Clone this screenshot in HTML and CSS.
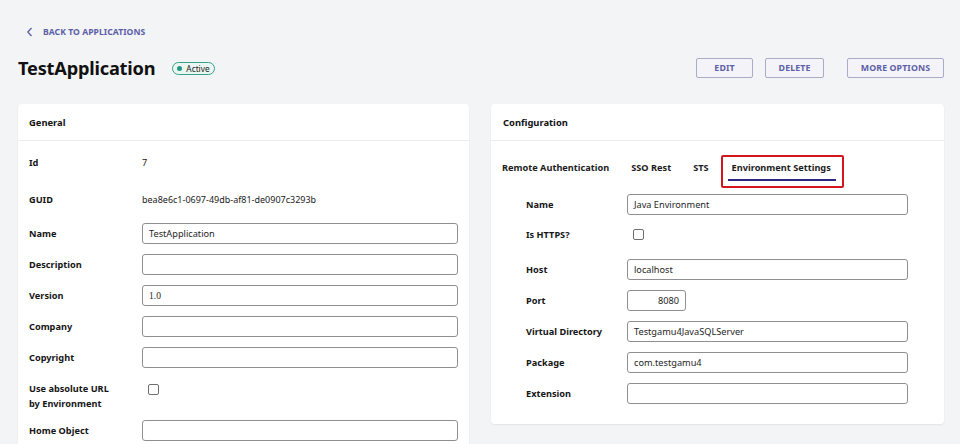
FILE: index.html
```html
<!DOCTYPE html>
<html lang="en">
<head>
<meta charset="utf-8">
<title>TestApplication</title>
<link rel="stylesheet" href="styles.css">
</head>
<body>
<div class="page">
  <a class="back" href="#">
    <svg class="chev" width="8" height="10" viewBox="0 0 8 10"><path d="M5.5 1 L1.8 5 L5.5 9" fill="none" stroke="#5c5fa8" stroke-width="1.3"/></svg>
    <span>BACK TO APPLICATIONS</span>
  </a>
  <div class="header">
    <div class="title-wrap">
      <h1 class="title">TestApplication</h1>
      <span class="badge"><span class="dot"></span>Active</span>
    </div>
    <div class="actions">
      <button class="btn">EDIT</button>
      <button class="btn">DELETE</button>
      <button class="btn btn-more">MORE OPTIONS</button>
    </div>
  </div>
  <div class="cards">
    <section class="card">
      <div class="card-head">General</div>
      <div class="card-body general">
        <div class="row info id-row"><div class="lbl">Id</div><div class="val">7</div></div>
        <div class="row info guid-row"><div class="lbl">GUID</div><div class="val">bea8e6c1-0697-49db-af81-de0907c3293b</div></div>
        <div class="row"><div class="lbl">Name</div><div class="inp">TestApplication</div></div>
        <div class="row"><div class="lbl">Description</div><div class="inp"></div></div>
        <div class="row"><div class="lbl">Version</div><div class="inp serif">1.0</div></div>
        <div class="row"><div class="lbl">Company</div><div class="inp"></div></div>
        <div class="row"><div class="lbl">Copyright</div><div class="inp"></div></div>
        <div class="row check-row"><div class="lbl two">Use absolute URL<br>by Environment</div><div class="cb cb-left"></div></div>
        <div class="row"><div class="lbl">Home Object</div><div class="inp"></div></div>
      </div>
    </section>
    <section class="card config">
      <div class="card-head">Configuration</div>
      <div class="card-body">
        <div class="tabs">
          <div class="tab">Remote Authentication</div>
          <div class="tab">SSO Rest</div>
          <div class="tab">STS</div>
          <div class="tab active"><span class="tab-label">Environment Settings</span></div>
        </div>
        <div class="env">
          <div class="row"><div class="lbl">Name</div><div class="inp">Java Environment</div></div>
          <div class="row cb-row"><div class="lbl">Is HTTPS?</div><div class="cb cb-right"></div></div>
          <div class="row"><div class="lbl">Host</div><div class="inp">localhost</div></div>
          <div class="row"><div class="lbl">Port</div><div class="inp port">8080</div></div>
          <div class="row"><div class="lbl">Virtual Directory</div><div class="inp">Testgamu4JavaSQLServer</div></div>
          <div class="row"><div class="lbl">Package</div><div class="inp">com.testgamu4</div></div>
          <div class="row"><div class="lbl">Extension</div><div class="inp"></div></div>
        </div>
      </div>
    </section>
  </div>
</div>
</body>
</html>
```
FILE: styles.css
```css
* { box-sizing: border-box; }
html, body { margin: 0; padding: 0; }
body {
  background: #f3f4f6;
  font-family: "Noto Sans", "Open Sans", sans-serif;
  color: #1b1b1b;
  width: 960px;
  height: 444px;
  overflow: hidden;
}
.page { padding: 25px 16px 0 18px; }
.back {
  display: flex;
  align-items: center;
  gap: 9px;
  margin-left: 8px;
  height: 14px;
  color: #5c5fa8;
  text-decoration: none;
  font-size: 8.6px;
  font-weight: 700;
  letter-spacing: 0.05px;
}
.header {
  display: flex;
  align-items: center;
  justify-content: space-between;
  margin-top: 17px;
  height: 24px;
}
.title-wrap { display: flex; align-items: center; gap: 17px; }
.title {
  margin: 0;
  font-size: 18.2px;
  font-weight: 700;
  letter-spacing: -0.2px;
  color: #111;
}
.badge {
  display: inline-flex;
  align-items: center;
  gap: 4px;
  height: 13px;
  padding: 0 4px 0 4px;
  border: 1px solid #35a08c;
  border-radius: 7px;
  background: #e9f6f2;
  font-size: 8.3px;
  color: #222;
  margin-top: 1px;
}
.dot { width: 5px; height: 5px; border-radius: 50%; background: #1f9a80; }
.actions { display: flex; gap: 12px; }
.btn {
  height: 20px;
  padding: 0;
  width: 57px;
  border: 1px solid #a9abc8;
  border-radius: 2px;
  background: #f4f4f8;
  color: #5d60a6;
  font-family: "Noto Sans", sans-serif;
  font-size: 8.8px;
  font-weight: 700;
  letter-spacing: 0.1px;
}
.btn:nth-child(2) { width: 59px; }
.btn-more { width: 97px; margin-left: 11px; }
.cards {
  display: grid;
  grid-template-columns: 451px 453px;
  gap: 22px;
  margin-top: 24px;
  align-items: start;
}
.card {
  background: #fff;
  border-radius: 4px;
  box-shadow: 0 1px 2px rgba(0,0,0,0.07);
}
.card-head {
  height: 37px;
  display: flex;
  align-items: center;
  padding-left: 11px;
  font-size: 9.4px;
  font-weight: 700;
  border-bottom: 1px solid #eceef1;
  color: #111;
}
.config .card-head { padding-left: 12px; }
.card-body { padding: 11px 11px 20px 11px; }
.general { height: 320px; }
.row {
  display: flex;
  align-items: center;
  height: 21px;
  margin-bottom: 10px;
}
.lbl {
  width: 113px;
  flex: none;
  font-size: 9.2px;
  font-weight: 700;
  color: #151515;
}
.lbl.two { line-height: 15px; }
.val { font-size: 9px; color: #222; }
.id-row { height: 20px; margin-bottom: 17px; }
.guid-row { height: 20px; margin-bottom: 14px; }
.check-row { height: 32px; align-items: flex-start; padding-top: 3px; }
.inp {
  flex: 1;
  height: 21px;
  border: 1px solid #8f8f8f;
  border-radius: 3px;
  background: #fff;
  font-size: 9.2px;
  padding-left: 6px;
  display: flex;
  align-items: center;
  color: #1e1e1e;
}
.inp.serif { font-family: "Liberation Serif", serif; font-size: 9.5px; }
.cb {
  width: 11px;
  height: 11px;
  border: 1px solid #6f6f6f;
  border-radius: 2px;
  background: #fff;
}
.cb-left { margin-left: 6px; margin-top: 3px; }
.cb-right { margin-left: 6px; }
.tabs {
  display: flex;
  align-items: flex-start;
  gap: 22px;
  height: 42px;
  padding-top: 9px;
  font-size: 9.2px;
  font-weight: 700;
}
.tab { line-height: 14px; }
.tab.active { position: relative; margin-left: 1px; }
.tab-label {
  display: inline-block;
  padding: 0 5px 4px 4px;
  margin-left: -4px;
  border-bottom: 2px solid #2a2880;
}
.tab.active::after {
  content: "";
  position: absolute;
  left: -11px;
  right: -8px;
  top: -6px;
  bottom: -7px;
  border: 2px solid #d3151f;
  border-radius: 2px;
}
.env { padding: 0 25px 0 24px; }
.env .lbl { width: 101px; }
.cb-row { height: 21px; margin-bottom: 14px; margin-top: -1px; }
.inp.port { flex: none; width: 59px; justify-content: flex-end; padding-right: 6px; }
.env .row:last-child { margin-bottom: 0; }
```
